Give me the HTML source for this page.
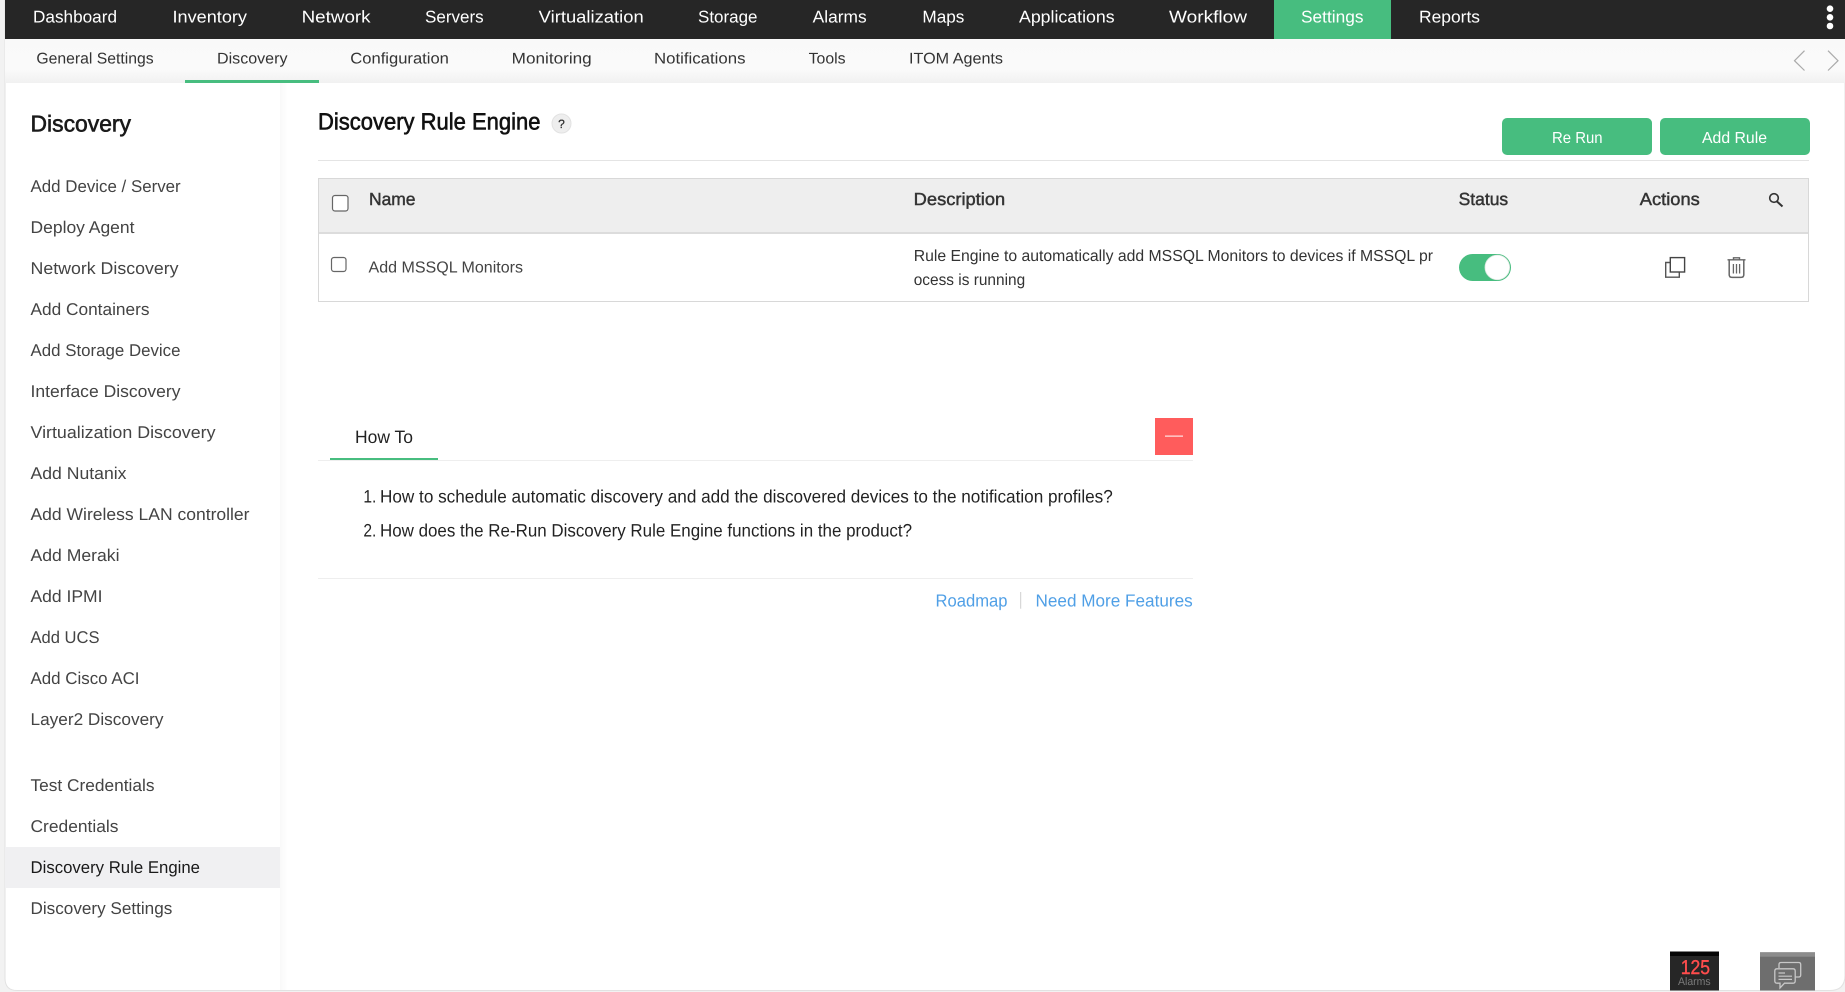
<!DOCTYPE html>
<html lang="en">
<head>
<meta charset="utf-8">
<title>Discovery Rule Engine</title>
<style>
html,body{margin:0;padding:0;width:1845px;height:992px;overflow:hidden;background:#f2f2f2}
svg{display:block;position:absolute;left:0;top:0}
text{font-family:"Liberation Sans",Arial,sans-serif;text-rendering:geometricPrecision}
.n{font-size:17px;fill:#fff}
.s{font-size:15.5px;fill:#333}
.m{font-size:17px;fill:#444}
.h{font-size:17.5px;fill:#333;stroke:#333;stroke-width:.45}
.l{font-size:18px;fill:#222}
.b{font-size:16px;fill:#fff}
.a{font-size:17.5px;fill:#4f9fe6}
</style>
</head>
<body>
<svg width="1845" height="992" viewBox="0 0 1845 992" xmlns="http://www.w3.org/2000/svg">
<defs>
<linearGradient id="sub" x1="0" y1="0" x2="0" y2="1"><stop offset="0" stop-color="#f9f9f9"/><stop offset=".7" stop-color="#fafafa"/><stop offset="1" stop-color="#f1f1f1"/></linearGradient>
<linearGradient id="side" x1="0" y1="0" x2="1" y2="0"><stop offset="0" stop-color="#f9f9f9"/><stop offset="1" stop-color="#fff"/></linearGradient>
</defs>

<!-- frame -->
<rect width="1845" height="992" fill="#f2f2f2"/>
<path d="M5 0H1845V975Q1845 990.5 1830 990.5H17Q5 990.5 5 978Z" fill="#fff" stroke="#e2e2e2" stroke-width="1"/>
<rect x="280" y="83" width="8" height="907" fill="url(#side)"/>

<!-- top nav -->
<rect x="5" y="0" width="1840" height="39" fill="#262626"/>
<rect x="1274" y="0" width="117" height="39" fill="#47bd7f"/>
<g class="nav">
<text class="n" x="33" y="22.5" textLength="84" lengthAdjust="spacingAndGlyphs">Dashboard</text>
<text class="n" x="172.5" y="22.5" textLength="74.5" lengthAdjust="spacingAndGlyphs">Inventory</text>
<text class="n" x="301.6" y="22.5" textLength="69" lengthAdjust="spacingAndGlyphs">Network</text>
<text class="n" x="425" y="22.5" textLength="58.7" lengthAdjust="spacingAndGlyphs">Servers</text>
<text class="n" x="538.7" y="22.5" textLength="105" lengthAdjust="spacingAndGlyphs">Virtualization</text>
<text class="n" x="698" y="22.5" textLength="59.5" lengthAdjust="spacingAndGlyphs">Storage</text>
<text class="n" x="812.7" y="22.5" textLength="54" lengthAdjust="spacingAndGlyphs">Alarms</text>
<text class="n" x="922.4" y="22.5" textLength="42" lengthAdjust="spacingAndGlyphs">Maps</text>
<text class="n" x="1019" y="22.5" textLength="95.6" lengthAdjust="spacingAndGlyphs">Applications</text>
<text class="n" x="1169" y="22.5" textLength="78" lengthAdjust="spacingAndGlyphs">Workflow</text>
<text class="n" x="1301" y="22.5" textLength="62.5" lengthAdjust="spacingAndGlyphs">Settings</text>
<text class="n" x="1419" y="22.5" textLength="61" lengthAdjust="spacingAndGlyphs">Reports</text>
</g>
<circle cx="1830" cy="8.7" r="3.3" fill="#fff"/>
<circle cx="1830" cy="17.3" r="3.3" fill="#fff"/>
<circle cx="1830" cy="26" r="3.3" fill="#fff"/>

<!-- sub nav -->
<rect x="5" y="39" width="1840" height="44" fill="url(#sub)"/>
<text class="s" x="36.4" y="63.7" textLength="117.3" lengthAdjust="spacingAndGlyphs">General Settings</text>
<text class="s" x="217" y="63.7" textLength="70.5" lengthAdjust="spacingAndGlyphs">Discovery</text>
<text class="s" x="350.3" y="63.7" textLength="98.6" lengthAdjust="spacingAndGlyphs">Configuration</text>
<text class="s" x="511.7" y="63.7" textLength="80" lengthAdjust="spacingAndGlyphs">Monitoring</text>
<text class="s" x="654" y="63.7" textLength="91.5" lengthAdjust="spacingAndGlyphs">Notifications</text>
<text class="s" x="808.6" y="63.7" textLength="37" lengthAdjust="spacingAndGlyphs">Tools</text>
<text class="s" x="909" y="63.7" textLength="94" lengthAdjust="spacingAndGlyphs">ITOM Agents</text>
<rect x="185" y="80" width="134" height="3" fill="#47bd7f"/>
<path d="M1804.5 50.7L1794.5 60.7L1804.5 70.5M1828 50.7L1838 60.7L1828 70.5" fill="none" stroke="#aaa" stroke-width="1.2"/>

<!-- sidebar -->
<text x="30.5" y="131.5" font-size="23" fill="#1a1a1a" stroke="#1a1a1a" stroke-width=".6" textLength="100.5" lengthAdjust="spacingAndGlyphs">Discovery</text>
<text class="m" x="30.5" y="192" textLength="150.2" lengthAdjust="spacingAndGlyphs">Add Device / Server</text>
<text class="m" x="30.5" y="233" textLength="104" lengthAdjust="spacingAndGlyphs">Deploy Agent</text>
<text class="m" x="30.5" y="274" textLength="148" lengthAdjust="spacingAndGlyphs">Network Discovery</text>
<text class="m" x="30.5" y="315" textLength="119" lengthAdjust="spacingAndGlyphs">Add Containers</text>
<text class="m" x="30.5" y="356" textLength="150" lengthAdjust="spacingAndGlyphs">Add Storage Device</text>
<text class="m" x="30.5" y="397" textLength="150" lengthAdjust="spacingAndGlyphs">Interface Discovery</text>
<text class="m" x="30.5" y="438" textLength="185" lengthAdjust="spacingAndGlyphs">Virtualization Discovery</text>
<text class="m" x="30.5" y="479" textLength="96" lengthAdjust="spacingAndGlyphs">Add Nutanix</text>
<text class="m" x="30.5" y="520" textLength="219" lengthAdjust="spacingAndGlyphs">Add Wireless LAN controller</text>
<text class="m" x="30.5" y="561" textLength="89" lengthAdjust="spacingAndGlyphs">Add Meraki</text>
<text class="m" x="30.5" y="602" textLength="72" lengthAdjust="spacingAndGlyphs">Add IPMI</text>
<text class="m" x="30.5" y="643" textLength="69" lengthAdjust="spacingAndGlyphs">Add UCS</text>
<text class="m" x="30.5" y="684" textLength="109" lengthAdjust="spacingAndGlyphs">Add Cisco ACI</text>
<text class="m" x="30.5" y="725" textLength="133" lengthAdjust="spacingAndGlyphs">Layer2 Discovery</text>
<text class="m" x="30.5" y="791" textLength="124" lengthAdjust="spacingAndGlyphs">Test Credentials</text>
<text class="m" x="30.5" y="832" textLength="88" lengthAdjust="spacingAndGlyphs">Credentials</text>
<rect x="5" y="847" width="275" height="41" fill="#f0f0f2"/>
<text class="m" x="30.5" y="873" textLength="169.5" lengthAdjust="spacingAndGlyphs" style="fill:#1a1a1a">Discovery Rule Engine</text>
<text class="m" x="30.5" y="914" textLength="141.8" lengthAdjust="spacingAndGlyphs">Discovery Settings</text>

<!-- title -->
<text x="318" y="129.5" font-size="23.5" fill="#111" stroke="#111" stroke-width=".6" textLength="222.5" lengthAdjust="spacingAndGlyphs">Discovery Rule Engine</text>
<circle cx="561.5" cy="123.5" r="9.5" fill="#eeeeee" stroke="#e2e2e2"/>
<text x="561.5" y="128" font-size="12" fill="#333" stroke="#333" stroke-width=".3" text-anchor="middle">?</text>

<!-- buttons -->
<rect x="1502" y="118" width="150" height="37" rx="5" fill="#47bd7f"/>
<rect x="1660" y="118" width="150" height="37" rx="5" fill="#47bd7f"/>
<text class="b" x="1552" y="142.8" textLength="50.6" lengthAdjust="spacingAndGlyphs">Re Run</text>
<text class="b" x="1702" y="142.8" textLength="65" lengthAdjust="spacingAndGlyphs">Add Rule</text>
<rect x="318" y="160" width="1491" height="1" fill="#e4e4e4"/>

<!-- table -->
<rect x="318.5" y="178.5" width="1490" height="123" fill="#fff" stroke="#d8d8d8"/>
<rect x="319" y="179" width="1489" height="53" fill="#eeeeee"/>
<rect x="319" y="232" width="1489" height="2" fill="#dcdcdc"/>
<rect x="332.5" y="195.5" width="15.5" height="15.5" rx="2.5" fill="#fff" stroke="#666" stroke-width="1.2"/>
<rect x="331.5" y="257.5" width="14.5" height="14" rx="2.5" fill="#fff" stroke="#666" stroke-width="1.2"/>
<text class="h" x="369" y="205" textLength="46.5" lengthAdjust="spacingAndGlyphs">Name</text>
<text class="h" x="913.7" y="205" textLength="91.5" lengthAdjust="spacingAndGlyphs">Description</text>
<text class="h" x="1458.6" y="205" textLength="49.6" lengthAdjust="spacingAndGlyphs">Status</text>
<text class="h" x="1639.8" y="205" textLength="60" lengthAdjust="spacingAndGlyphs">Actions</text>
<circle cx="1774" cy="198" r="4.3" fill="none" stroke="#333" stroke-width="1.6"/>
<path d="M1777 201.5L1782.5 206.5" stroke="#333" stroke-width="2"/>

<text x="368.5" y="272.5" font-size="16" fill="#444" textLength="154.5" lengthAdjust="spacingAndGlyphs">Add MSSQL Monitors</text>
<text x="913.7" y="261" font-size="16" fill="#333" textLength="519.3" lengthAdjust="spacingAndGlyphs">Rule Engine to automatically add MSSQL Monitors to devices if MSSQL pr</text>
<text x="913.7" y="285" font-size="16" fill="#333" textLength="111.5" lengthAdjust="spacingAndGlyphs">ocess is running</text>

<!-- toggle -->
<rect x="1459" y="254" width="52" height="27" rx="13.5" fill="#47bd7f"/>
<circle cx="1497.3" cy="267.4" r="12.3" fill="#fff" stroke="#dfe8e2" stroke-width=".8"/>

<!-- copy icon -->
<path d="M1670 262.5H1665.7V277.2H1679.3V272" fill="none" stroke="#555" stroke-width="1.4"/>
<rect x="1670.3" y="257.6" width="14.3" height="14.4" fill="#fff" stroke="#444" stroke-width="1.4"/>

<!-- trash icon -->
<path d="M1727.5 259.8H1745.5M1733.5 259.5V257.8H1739.5V259.5" fill="none" stroke="#666" stroke-width="1.4"/>
<path d="M1729.2 260V274.8Q1729.2 277.4 1732 277.4H1741Q1743.8 277.4 1743.8 274.8V260" fill="none" stroke="#666" stroke-width="1.5"/>
<path d="M1733.4 264V273.5M1736.5 264V273.5M1739.6 264V273.5" fill="none" stroke="#666" stroke-width="1.3"/>

<!-- How To -->
<text x="355" y="443" font-size="18" fill="#222" textLength="58" lengthAdjust="spacingAndGlyphs">How To</text>
<rect x="318" y="460" width="875" height="1" fill="#eeeeee"/>
<rect x="330" y="458" width="108" height="2" fill="#47bd7f"/>
<rect x="1155" y="418" width="38" height="37" fill="#ff5c5c"/>
<rect x="1165" y="435.6" width="18" height="1" fill="#fff"/>
<text class="l" x="363.4" y="502.7" textLength="13" lengthAdjust="spacingAndGlyphs">1.</text>
<text class="l" x="380" y="502.7" textLength="732.8" lengthAdjust="spacingAndGlyphs">How to schedule automatic discovery and add the discovered devices to the notification profiles?</text>
<text class="l" x="363.4" y="536.7" textLength="13" lengthAdjust="spacingAndGlyphs">2.</text>
<text class="l" x="380" y="536.7" textLength="532" lengthAdjust="spacingAndGlyphs">How does the Re-Run Discovery Rule Engine functions in the product?</text>
<rect x="318" y="578" width="875" height="1" fill="#eeeeee"/>
<text class="a" x="935.5" y="606.5" textLength="72" lengthAdjust="spacingAndGlyphs">Roadmap</text>
<rect x="1020.2" y="592" width="1" height="16.7" fill="#cfcfcf"/>
<text class="a" x="1035.5" y="606.5" textLength="157.2" lengthAdjust="spacingAndGlyphs">Need More Features</text>

<!-- alarms widget -->
<rect x="1670" y="951.5" width="49" height="39" fill="#262626"/>
<rect x="1670" y="951.5" width="49" height="4.5" fill="#050505"/>
<text x="1680.7" y="974" font-size="20" fill="#ff4d4d" stroke="#ff4d4d" stroke-width=".4" textLength="29.3" lengthAdjust="spacingAndGlyphs">125</text>
<text x="1678" y="985" font-size="11" fill="#7b7b7b" textLength="32.7" lengthAdjust="spacingAndGlyphs">Alarms</text>

<!-- chat widget -->
<rect x="1760" y="952.3" width="55" height="38.2" fill="#6e6e6e"/>
<rect x="1760" y="952.3" width="55" height="4.4" fill="#8c8c8c"/>
<path d="M1779 968V964.5Q1779 962.5 1781 962.5H1798.7Q1800.7 962.5 1800.7 964.5V975Q1800.7 977 1798.7 977H1795.5" fill="none" stroke="#c8c8c8" stroke-width="1.3"/>
<path d="M1777 968.8H1793Q1795.2 968.8 1795.2 971V981Q1795.2 983.2 1793 983.2H1784.5L1780 988V983.2H1777Q1774.8 983.2 1774.8 981V971Q1774.8 968.8 1777 968.8Z" fill="#6e6e6e" stroke="#c8c8c8" stroke-width="1.3"/>
<path d="M1778.5 973H1785M1778.5 976.2H1792M1778.5 979.4H1792" fill="none" stroke="#c8c8c8" stroke-width="1.2"/>
</svg>
</body>
</html>
